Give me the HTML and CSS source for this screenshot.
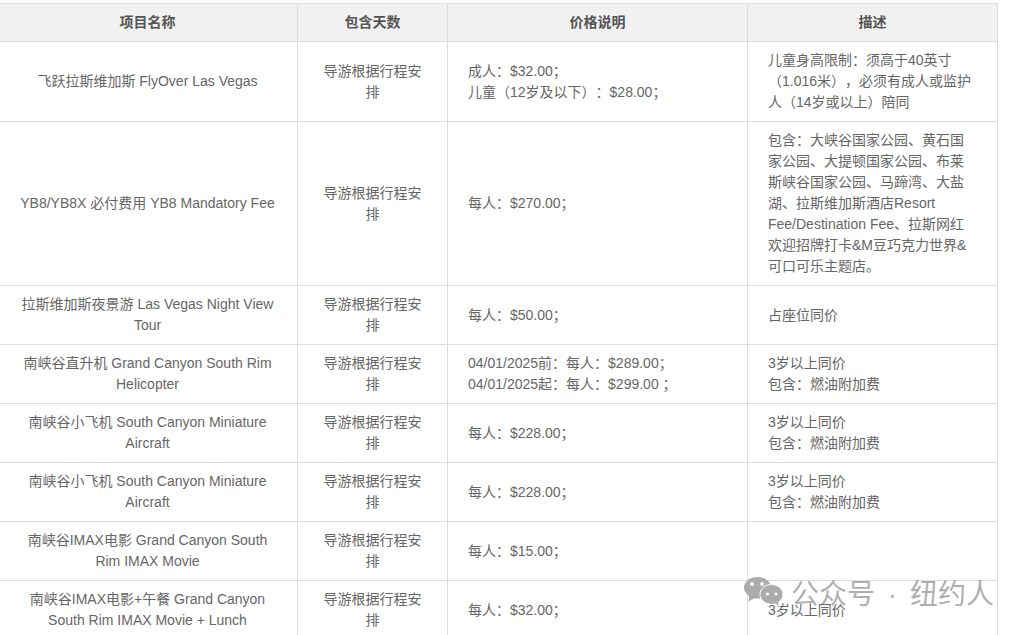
FILE: index.html
```html
<!DOCTYPE html>
<html lang="zh-CN">
<head>
<meta charset="utf-8">
<title>项目价格</title>
<link rel="stylesheet" href="styles.css">
</head>
<body>
<table class="price-table">
<colgroup><col class="c1"><col class="c2"><col class="c3"><col class="c4"></colgroup>
<thead>
<tr><th>项目名称</th><th>包含天数</th><th>价格说明</th><th>描述</th></tr>
</thead>
<tbody>
<tr>
<td class="center">飞跃拉斯维加斯 FlyOver Las Vegas</td>
<td class="center">导游根据行程安排</td>
<td>成人&#xFF1A;$32.00&#xFF1B;<br>儿童&#xFF08;12岁及以下&#xFF09;&#xFF1A;$28.00&#xFF1B;</td>
<td>儿童身高限制&#xFF1A;须高于40英寸&#xFF08;1.016米&#xFF09;&#xFF0C;必须有成人或监护人&#xFF08;14岁或以上&#xFF09;陪同</td>
</tr>
<tr>
<td class="center">YB8/YB8X 必付费用 YB8 Mandatory Fee</td>
<td class="center">导游根据行程安排</td>
<td>每人&#xFF1A;$270.00&#xFF1B;</td>
<td>包含&#xFF1A;大峡谷国家公园、黄石国家公园、大提顿国家公园、布莱斯峡谷国家公园、马蹄湾、大盐湖、拉斯维加斯酒店Resort Fee/Destination Fee、拉斯网红欢迎招牌打卡&amp;M豆巧克力世界&amp;可口可乐主题店。</td>
</tr>
<tr>
<td class="center">拉斯维加斯夜景游 Las Vegas Night View Tour</td>
<td class="center">导游根据行程安排</td>
<td>每人&#xFF1A;$50.00&#xFF1B;</td>
<td>占座位同价</td>
</tr>
<tr>
<td class="center">南峡谷直升机 Grand Canyon South Rim Helicopter</td>
<td class="center">导游根据行程安排</td>
<td>04/01/2025前&#xFF1A;每人&#xFF1A;$289.00&#xFF1B;<br>04/01/2025起&#xFF1A;每人&#xFF1A;$299.00 &#xFF1B;</td>
<td>3岁以上同价<br>包含&#xFF1A;燃油附加费</td>
</tr>
<tr>
<td class="center">南峡谷小飞机 South Canyon Miniature Aircraft</td>
<td class="center">导游根据行程安排</td>
<td>每人&#xFF1A;$228.00&#xFF1B;</td>
<td>3岁以上同价<br>包含&#xFF1A;燃油附加费</td>
</tr>
<tr>
<td class="center">南峡谷小飞机 South Canyon Miniature Aircraft</td>
<td class="center">导游根据行程安排</td>
<td>每人&#xFF1A;$228.00&#xFF1B;</td>
<td>3岁以上同价<br>包含&#xFF1A;燃油附加费</td>
</tr>
<tr>
<td class="center">南峡谷IMAX电影 Grand Canyon South Rim IMAX Movie</td>
<td class="center">导游根据行程安排</td>
<td>每人&#xFF1A;$15.00&#xFF1B;</td>
<td></td>
</tr>
<tr>
<td class="center">南峡谷IMAX电影+午餐 Grand Canyon South Rim IMAX Movie + Lunch</td>
<td class="center">导游根据行程安排</td>
<td>每人&#xFF1A;$32.00&#xFF1B;</td>
<td>3岁以上同价</td>
</tr>
</tbody>
</table>
<div class="watermark">
<svg class="wm-icon" width="39" height="30" viewBox="0 0 39 30" aria-hidden="true">
<path class="wm-back" d="M13.500 0C6 0 0 4.700 0 10.600c0 3.400 2 6.400 5.100 8.300L4.500 24.500l5.700-3.300c1.100.2 2.200.3 3.300.3 7.500 0 13.500-4.900 13.500-10.900S21 0 13.500 0z"/>
<circle class="wm-eye" cx="8" cy="7" r="1.900"/>
<circle class="wm-eye" cx="18" cy="7" r="1.900"/>
<path class="wm-front" d="M27.500 7.500c-6.300 0-11.500 4.400-11.500 9.900s5.200 9.900 11.500 9.900c1.200 0 2.300-.2 3.400-.5l4.600 2.700-.8-4.500c2.600-1.800 4.300-4.500 4.300-7.600 0-5.500-5.200-9.900-11.500-9.900z"/>
<circle class="wm-eye" cx="23.500" cy="17" r="1.600"/>
<circle class="wm-eye" cx="32" cy="17" r="1.600"/>
</svg>
<span class="wm-text">公众号 · 纽约人</span>
</div>
</body>
</html>
```
FILE: styles.css
```css
html, body {
  margin: 0;
  padding: 0;
  height: 635px;
  overflow: hidden;
  background: #fff;
}
body {
  position: relative;
  padding-top: 3px;
  box-sizing: border-box;
  font-family: "Liberation Sans", "Noto Sans CJK SC", sans-serif;
  font-size: 14px;
  line-height: 21px;
  color: #666;
  text-spacing-trim: space-all;
}
.price-table {
  border-collapse: collapse;
  table-layout: fixed;
  width: 1000px;
  margin-left: -3px;
}
.c1 { width: 300px; }
.c2 { width: 150px; }
.c3 { width: 300px; }
.c4 { width: 250px; }
.price-table th,
.price-table td {
  border: 1px solid #ddd;
  padding: 8px 20px;
  vertical-align: middle;
  text-align: left;
}
.price-table th {
  background: #f1f1f1;
  color: #555;
  font-weight: 700;
  text-align: center;
}
.price-table td.center { text-align: center; }
.watermark {
  position: absolute;
  left: 744px;
  top: 577px;
  display: flex;
  align-items: flex-start;
  gap: 8px;
  white-space: nowrap;
}
.wm-icon { display: block; }
.wm-back { fill: #ababab; }
.wm-front { fill: #ababab; stroke: #fff; stroke-width: 1; }
.wm-eye { fill: #fff; }
.wm-text {
  margin-top: 2px;
  font-size: 28px;
  line-height: 32px;
  word-spacing: 5px;
  color: rgba(120, 120, 120, 0.6);
}
```
